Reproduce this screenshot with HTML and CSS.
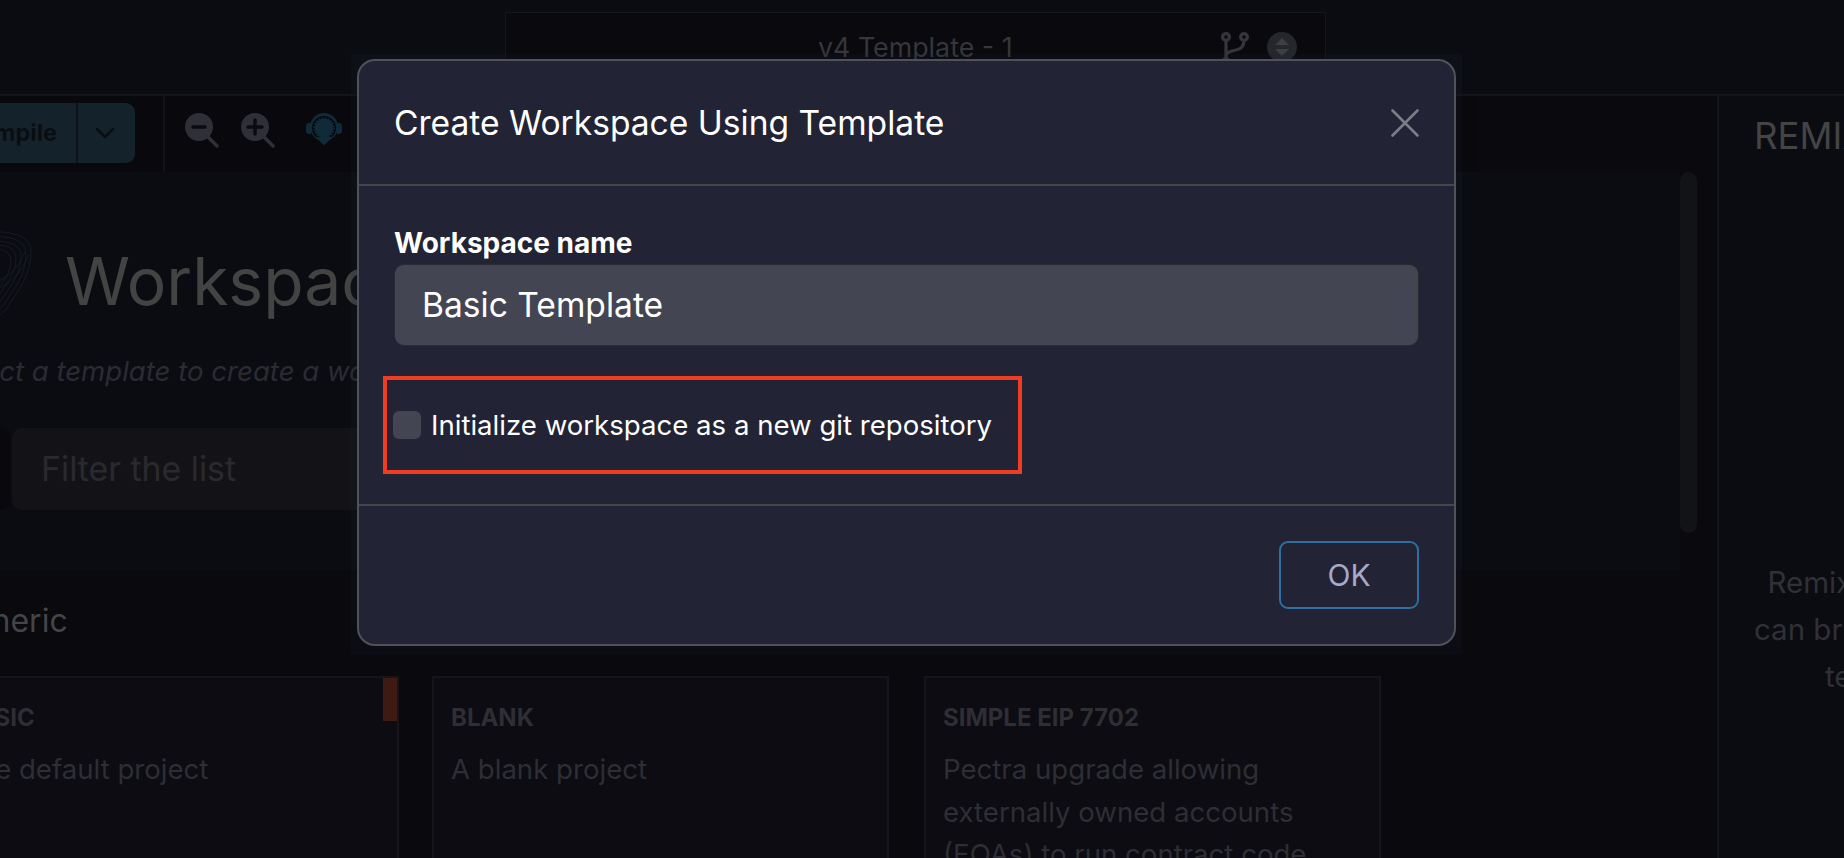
FILE: index.html
```html
<!DOCTYPE html>
<html lang="en">
<head>
<meta charset="utf-8">
<title>Create Workspace Using Template</title>
<link rel="stylesheet" href="styles.css">
</head>
<body>
<div class="app">
  <header class="topbar">
    <div class="title-box">
      <span class="title-text">v4 Template - 1</span>
      <svg class="branch-icon" viewBox="0 0 28 36" fill="none" stroke="#35353b" stroke-width="3.2"><circle cx="5" cy="5" r="3.4"/><circle cx="23" cy="5" r="3.4"/><circle cx="5" cy="30" r="3.4"/><path d="M5 8.500v18M23 8.500c0 6-3 8.500-8 9.500-5 1-10 2-10 6"/></svg>
      <svg class="updown-icon" viewBox="0 0 30 30"><circle cx="15" cy="15" r="15" fill="#26272c"/><path d="M15 6l7 7H8zM15 24l-7-7h14z" fill="#3e3f45"/></svg>
    </div>
  </header>
  <div class="main">
    <section class="content">
      <div class="toolbar">
        <div class="compile-btn">
          <span class="compile-label">Compile</span>
          <span class="compile-caret">
            <svg class="caret-icon" viewBox="0 0 20 12" fill="none" stroke="#0a0e13" stroke-width="2.6" stroke-linecap="round" stroke-linejoin="round"><path d="M2 2l8 8 8-8"/></svg>
          </span>
        </div>
        <div class="tools">
          <svg class="zoom-icon" viewBox="0 0 36 36"><circle cx="15" cy="15" r="14" fill="#2f2f37"/><path d="M23 24l10 10" stroke="#2f2f37" stroke-width="3.5" stroke-linecap="round"/><path d="M9 15h12" stroke="#0b0b11" stroke-width="3.5" stroke-linecap="round"/></svg>
          <svg class="zoom-icon" viewBox="0 0 36 36"><circle cx="15" cy="15" r="14" fill="#2f2f37"/><path d="M23 24l10 10" stroke="#2f2f37" stroke-width="3.5" stroke-linecap="round"/><path d="M8 15h14M15 8v14" stroke="#0b0b11" stroke-width="3.5" stroke-linecap="round"/></svg>
          <svg class="headset-icon" viewBox="0 0 36 34"><circle cx="18" cy="15" r="14" fill="#0f2a38"/><rect x="0" y="11" width="6" height="11" rx="3" fill="#0f2a38"/><rect x="30" y="11" width="6" height="11" rx="3" fill="#0f2a38"/><circle cx="18" cy="16" r="12" fill="#08080d"/><circle cx="18" cy="16" r="9.500" fill="#0f2a38" stroke="#0f2a38" stroke-width="2.500" stroke-dasharray="1.600 1.400"/><path d="M9 25h18l-9 8.500z" fill="#0f2a38"/></svg>
        </div>
      </div>
      <div class="home">
        <div class="upper">
          <div class="hero">
            <svg class="hero-logo" viewBox="0 0 92 92" fill="none" stroke="#1b2129" stroke-width="0.700"><path d="M40 3C62 0 90 2 90 22 90 44 78 60 66 78 58 90 40 92 30 84 14 70 8 40 16 20 20 9 30 4 40 3z"/><path d="M42 7C62 5 85 7 85 24 85 44 74 58 63 74 55 85 41 87 33 80 18 67 13 41 20 23 24 12 33 8 42 7z"/><path d="M44 11C61 10 80 12 80 26 80 43 70 56 60 70 53 80 42 82 36 76 23 64 18 42 25 26 28 16 36 12 44 11z"/><path d="M46 15C60 14 75 16 75 28 75 43 66 54 57 66 51 75 43 77 39 72 28 61 23 43 29 29 32 20 39 16 46 15z"/><path d="M48 19C60 18 70 21 70 31 70 43 62 52 54 62 49 70 44 71 42 68 32 58 28 44 34 32 37 24 42 20 48 19z"/><path d="M38 58C52 66 78 52 88 24M34 50C52 60 74 46 84 22"/></svg>
            <h1 class="hero-title">Workspaces</h1>
          </div>
          <p class="hero-sub">Select a template to create a workspace</p>
          <div class="filter-row">
            <span class="filter-side"></span>
            <div class="filter-input">Filter the list</div>
          </div>
        </div>
        <div class="lower">
          <h2 class="section-title">Generic</h2>
          <div class="cards">
            <article class="card">
              <span class="card-badge"></span>
              <h3 class="card-title">BASIC</h3>
              <p class="card-text">The default project</p>
            </article>
            <article class="card">
              <h3 class="card-title">BLANK</h3>
              <p class="card-text">A blank project</p>
            </article>
            <article class="card card-last">
              <h3 class="card-title">SIMPLE EIP 7702</h3>
              <p class="card-text">Pectra upgrade allowing externally owned accounts (EOAs) to run contract code</p>
            </article>
          </div>
        </div>
      </div>
      <div class="scrollbar"></div>
    </section>
    <aside class="side">
      <h2 class="side-title">REMIX AI</h2>
      <p class="side-text">Remix AI Workspace Generator<br>can bring your ideas to life with a<br>templates and prompts</p>
    </aside>
  </div>
</div>

<div class="modal-dialog" role="dialog">
  <div class="modal-content">
    <div class="modal-header">
      <h4 class="modal-title">Create Workspace Using Template</h4>
      <svg class="close-icon" viewBox="0 0 28 28" fill="none" stroke="#7d7d88" stroke-width="2.6" stroke-linecap="round"><path d="M1.500 1.500l25 25M26.500 1.500l-25 25"/></svg>
    </div>
    <div class="modal-body">
      <label class="field-label">Workspace name</label>
      <div class="field-input">Basic Template</div>
      <div class="check-highlight">
        <span class="check-box"></span>
        <span class="check-label">Initialize workspace as a new git repository</span>
      </div>
    </div>
    <div class="modal-footer">
      <button class="ok-btn">OK</button>
    </div>
  </div>
</div>
</body>
</html>
```

FILE: styles.css
```css
* { box-sizing: border-box; }
html, body { margin: 0; padding: 0; height: 100%; overflow: hidden; background: #0b0c11; }
body { font-family: "Inter", "Liberation Sans", sans-serif; }
h1, h2, h3, h4, p { margin: 0; font-weight: 400; }

.app { width: 1844px; height: 858px; display: flex; flex-direction: column; overflow: hidden; background: #0b0c11; }

.topbar { height: 96px; flex: none; border-bottom: 2px solid #141419; padding: 12px 0 0 505px; }
.title-box { width: 821px; height: 62px; border: 1px solid #15151b; background: #09090e; display: flex; align-items: flex-start; padding: 19px 28px 0 0; }
.title-text { margin-left: 312px; color: #36363c; font-size: 26.800px; line-height: 30px; flex: 1; white-space: nowrap; }
.branch-icon { width: 28px; height: 36px; }
.updown-icon { width: 30px; height: 30px; margin-left: 18px; }

.main { flex: 1; display: flex; min-height: 0; }
.content { width: 1717px; flex: none; position: relative; overflow: hidden; background: #09090e; }

.toolbar { height: 76px; display: flex; margin-left: -60px; background: #08080d; width: 1538px; }
.compile-btn { display: flex; height: 60px; margin-top: 7px; background: #14222c; border-radius: 9px; color: #0a0e13; }
.compile-label { width: 138px; border-right: 2px solid #0d1319; font-weight: 700; font-size: 23.500px; line-height: 60px; text-align: right; padding-right: 19px; }
.compile-caret { width: 57px; display: flex; align-items: center; justify-content: center; padding-right: 4px; }
.caret-icon { width: 20px; height: 12px; }
.tools { margin-left: 28px; border-left: 2px solid #121217; padding: 16px 0 0 19px; display: flex; align-items: flex-start; }
.zoom-icon { width: 36px; height: 36px; margin-right: 20px; }
.headset-icon { width: 36px; height: 34px; margin-left: 10px; }

.home { margin-left: -59px; }
.upper { height: 398px; width: 1739px; background: #0b0c11; padding-top: 58px; }
.hero { display: flex; align-items: center; height: 92px; }
.hero-logo { width: 92px; height: 92px; flex: none; }
.hero-title { margin: 10px 0 0 32px; font-size: 66px; line-height: 92px; color: #434343; }
.hero-sub { margin: 31px 0 0 2px; font-size: 27.600px; line-height: 36px; font-style: italic; color: #2b2b33; }
.filter-row { display: flex; margin-top: 39px; height: 82px; }
.filter-side { width: 69px; background: #08080d; border-radius: 0 10px 10px 0; flex: none; }
.filter-input { width: 900px; margin-left: 2px; background: #131317; border-radius: 10px; color: #2a2a2e; font-size: 33.800px; line-height: 82px; padding-left: 29px; }

.lower { background: #09090e; }
.section-title { font-size: 32px; line-height: 40px; color: #444449; margin: 0 0 0 1px; padding: 31px 0 0 7px; height: 71px; }
.cards { display: flex; gap: 33px; margin: 35px 0 0 1px; }
.card { width: 457px; height: 300px; flex: none; background: #0c0c12; border: 2px solid #15151b; padding: 26px 17px; position: relative; }
.card-last { margin-left: 2px; }
.card-badge { position: absolute; top: 0; right: 0; width: 14px; height: 43px; background: #3f1a12; }
.card-title { font-size: 24px; line-height: 28px; font-weight: 700; color: #2e2e34; }
.card-text { margin-top: 16px; font-size: 27.600px; line-height: 42.500px; color: #2e2e34; }

.scrollbar { position: absolute; top: 76px; right: 20px; width: 17px; height: 361px; background: #111317; border-radius: 9px; }

.side { flex: 1; border-left: 2px solid #141419; background: #0b0c11; overflow: hidden; }
.side-title { white-space: nowrap; font-size: 36.500px; line-height: 44px; color: #444; margin: 18px 0 0 35px; }
.side-text { width: 532px; margin: 401px 0 0 0; text-align: center; white-space: nowrap; font-size: 29.500px; line-height: 47px; color: #303036; }

.modal-dialog { position: absolute; left: 351px; top: 54px; width: 1111px; height: 601px; padding: 5px 6px 9px; background: rgba(34, 36, 56, 0.16); }
.modal-content { height: 100%; display: flex; flex-direction: column; background: #222334; border: 2px solid #515257; border-radius: 18px; color: #fff; }
.modal-header { height: 125px; flex: none; border-bottom: 2px solid #46464c; display: flex; align-items: center; justify-content: space-between; padding: 0 35px; }
.modal-title { font-size: 33.600px; line-height: 40px; }
.close-icon { width: 28px; height: 28px; }
.modal-body { flex: none; height: 320px; border-bottom: 2px solid #46464c; padding: 41px 35px 0; }
.field-label { display: block; font-weight: 700; font-size: 28px; line-height: 32px; }
.field-input { height: 82px; margin-top: 5px; background: #444553; border: 1px solid #2a2a30; border-radius: 10px; font-size: 33.600px; line-height: 80px; padding-left: 27px; }
.check-highlight { margin: 30px 0 0 -11px; width: 639px; height: 98px; border: 4px solid #ef3c22; display: flex; align-items: center; padding-left: 6px; }
.check-box { width: 28px; height: 28px; background: #444553; border-radius: 6px; flex: none; }
.check-label { margin-left: 10px; font-size: 27.600px; line-height: 32px; white-space: nowrap; }
.modal-footer { flex: 1; display: flex; justify-content: flex-end; align-items: flex-start; padding: 35px 35px 0 0; }
.ok-btn { width: 140px; height: 68px; background: transparent; border: 2px solid #2f6f9f; border-radius: 9px; color: #a8a8c8; font-family: inherit; font-size: 30px; }
```
